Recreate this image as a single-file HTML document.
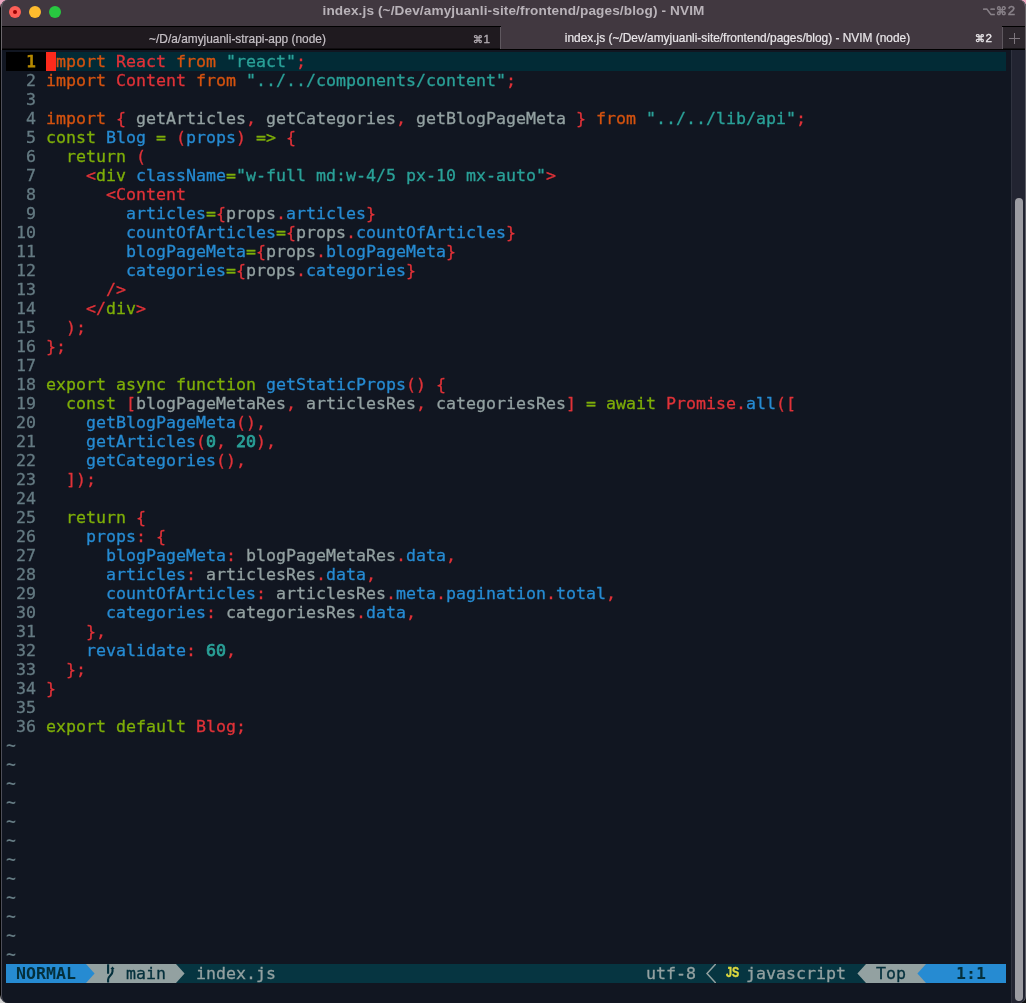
<!DOCTYPE html>
<html lang="en">
<head>
<meta charset="utf-8">
<title>index.js (~/Dev/amyjuanli-site/frontend/pages/blog) - NVIM</title>
<style>
html,body{margin:0;padding:0}
body{width:1026px;height:1003px;overflow:hidden;position:relative;background:#000;
  font-family:"Liberation Sans","DejaVu Sans",sans-serif;}
.abs{position:absolute}
/* desktop peeking out behind the rounded corners */
#ctl{left:0;top:0;width:8px;height:8px;background:linear-gradient(180deg,#eba6bf 0,#eba6bf 45%,#000 100%)}
#ctr{right:0;top:0;width:8px;height:8px;background:linear-gradient(180deg,#eba6bf 0,#eba6bf 45%,#6a4a58 100%)}
#cbl{left:0;bottom:0;width:8px;height:8px;background:linear-gradient(0deg,#d0d0d0 0,#d0d0d0 45%,#000 100%)}
#cbr{right:0;bottom:0;width:8px;height:8px;background:#111}
#win{left:1px;top:0;width:1025px;height:1003px;background:#111621;border-radius:7px;overflow:hidden;
  box-sizing:border-box;will-change:transform;}
#edge{left:1px;top:0;width:1025px;height:1003px;border-radius:7px;box-sizing:border-box;
  border-left:1px solid #4d4e58;border-right:1px solid #5f6068;pointer-events:none}
#edge2{left:1px;top:0;width:1025px;height:50px;border-radius:7px 7px 0 0;box-sizing:border-box;border-left:1px solid #6c676c;border-right:1px solid #6c676c;pointer-events:none}
#title{left:0;top:0;width:1025px;height:26px;background:#413840}
#title .t{left:0;right:0;top:3px;text-align:center;font-weight:bold;font-size:13.6px;color:#b9b3b9;letter-spacing:0.12px}
.dot{width:12px;height:12px;border-radius:50%;top:6px}
#short{right:11px;top:3px;font-size:13.2px;line-height:15px;color:#8a838a;font-family:"Liberation Sans","DejaVu Sans",sans-serif;-webkit-text-stroke:0.5px #8a838a;white-space:nowrap}
#short .sym{font-family:"DejaVu Sans",sans-serif;font-size:11.2px;letter-spacing:0.6px;vertical-align:0.5px}
#tabs{left:0;top:26px;width:1025px;height:24px;background:#000}
.tab{top:0;height:23px;font-size:11.9px;color:#c6c1c6;-webkit-text-stroke:0.2px currentColor}
.tab .lbl{left:0;right:0;top:5px;text-align:center}
.tab .key{right:10px;top:5px;font-family:"Liberation Sans","DejaVu Sans",sans-serif;font-size:11.6px;line-height:14px;-webkit-text-stroke:0.35px currentColor;white-space:nowrap}
.tab .key .sym{font-family:"DejaVu Sans",sans-serif;font-size:10.4px;margin-right:0.3px}
#t1 .key{color:#b3adb3}
#t1{left:0;width:499px;top:1px;height:21px;background:#1f1a1f;border-bottom:1px solid #100d10}
#t2{left:500px;width:501px;top:0;height:23px;background:#413840;color:#e9e6e9}
#tplus{left:1002px;width:23px;top:1px;height:21px;background:#2e282e;border-bottom:1px solid #171417}
.sep{width:1px;background:#5f585f;top:0;height:22px}
#term{left:0;top:50px;width:1025px;height:953px;background:#111621}
.row{position:absolute;left:5px;height:19px;line-height:19px;white-space:pre;
  font-family:"DejaVu Sans Mono","Liberation Mono",monospace;font-size:16.61px;color:#93a1a1;width:1000px;-webkit-text-stroke:0.3px}
.cl{background:#022b36}
.ln{color:#657b83}
.lnc{color:#b58900;font-weight:normal;-webkit-text-stroke:0.75px;background:#000;display:inline-block;height:19px}
.cur{background:#fc2a1c;color:transparent;display:inline-block;height:19px}
.k{font-weight:normal;-webkit-text-stroke:0.75px}
.tl{font-weight:bold;-webkit-text-stroke:0}
.o{color:#d5530f}
.r{color:#e03238}
.c{color:#2aa198}
.g{color:#7eae08}
.b{color:#268bd2}
.n{color:#93a1a1}
.y{color:#b58900}
#sbar{left:1010px;top:50px;width:15px;height:953px;background:#222431;border-left:1px solid #30333f;box-sizing:border-box}
#thumb{left:1014px;top:198px;width:8px;height:803px;border-radius:4px;background:#9c9ca2}
#status{left:5px;top:964px;width:1000px;height:19px;background:#063541;line-height:19px;white-space:pre;
  font-family:"DejaVu Sans Mono","Liberation Mono",monospace;font-size:16.61px;color:#93a1a1;-webkit-text-stroke:0.3px}
#status .seg{position:absolute;top:0;height:19px}
#status .js{color:#ddd83f;font-family:"Liberation Sans",sans-serif;font-weight:bold;font-size:14.2px;line-height:19px;top:-1px;transform-origin:0 50%;transform:scaleX(0.76);width:18px;-webkit-text-stroke:0.45px #ddd83f}
</style>
</head>
<body>
<div id="ctl" class="abs"></div><div id="ctr" class="abs"></div><div id="cbl" class="abs"></div><div id="cbr" class="abs"></div>
<div id="win" class="abs">
  <div id="title" class="abs">
    <div class="dot abs" style="left:8px;background:#fe5f57"></div>
    <div class="abs" style="left:12px;top:10px;width:4px;height:4px;border-radius:50%;background:#990000"></div>
    <div class="dot abs" style="left:28px;background:#febb2e"></div>
    <div class="dot abs" style="left:48px;background:#28c840"></div>
    <div class="t abs">index.js (~/Dev/amyjuanli-site/frontend/pages/blog) - NVIM</div>
    <div id="short" class="abs"><span class="sym">&#x2325;&#x2318;</span>2</div>
  </div>
  <div id="tabs" class="abs">
    <div id="t1" class="tab abs"><div class="lbl abs" style="left:0;width:473px">~/D/a/amyjuanli-strapi-app (node)</div><div class="key abs"><span class="sym">&#x2318;</span>1</div></div>
    <div class="sep abs" style="left:499px;top:1px;height:22px"></div>
    <div id="t2" class="tab abs"><div class="lbl abs" style="left:0;width:473px">index.js (~/Dev/amyjuanli-site/frontend/pages/blog) - NVIM (node)</div><div class="key abs"><span class="sym">&#x2318;</span>2</div></div>
    <div class="sep abs" style="left:1001px;top:1px;height:22px"></div>
    <div id="tplus" class="abs"><svg class="abs" style="left:5px;top:5px" width="13" height="13" viewBox="0 0 13 13"><path d="M6.5 1v11M1 6.5h11" stroke="#7d767d" stroke-width="1" fill="none"/></svg></div>
  </div>
  <div id="term" class="abs"></div>
  <div id="sbar" class="abs"></div>
  <div id="thumb" class="abs"></div>
  <div style="top:52px" class="row cl"><span class="lnc">  1 </span><span class="cur">i</span><span class="o">mport</span> <span class="r">React</span> <span class="o">from</span> <span class="c">"react"</span><span class="r">;</span></div>
  <div style="top:71px" class="row"><span class="ln">  2 </span><span class="o">import</span> <span class="r">Content</span> <span class="o">from</span> <span class="c">"../../components/content"</span><span class="r">;</span></div>
  <div style="top:90px" class="row"><span class="ln">  3 </span></div>
  <div style="top:109px" class="row"><span class="ln">  4 </span><span class="o">import</span> <span class="r">{</span><span class="n"> getArticles</span><span class="r">,</span><span class="n"> getCategories</span><span class="r">,</span><span class="n"> getBlogPageMeta </span><span class="r">}</span> <span class="o">from</span> <span class="c">"../../lib/api"</span><span class="r">;</span></div>
  <div style="top:128px" class="row"><span class="ln">  5 </span><span class="g">const</span> <span class="b">Blog</span> <span class="g">=</span> <span class="r">(</span><span class="b">props</span><span class="r">)</span> <span class="g">=&gt;</span> <span class="r">{</span></div>
  <div style="top:147px" class="row"><span class="ln">  6 </span>  <span class="g">return</span> <span class="r">(</span></div>
  <div style="top:166px" class="row"><span class="ln">  7 </span>    <span class="r">&lt;</span><span class="g">div</span> <span class="b">className</span><span class="g">=</span><span class="c">"w-full md:w-4/5 px-10 mx-auto"</span><span class="r">&gt;</span></div>
  <div style="top:185px" class="row"><span class="ln">  8 </span>      <span class="r">&lt;Content</span></div>
  <div style="top:204px" class="row"><span class="ln">  9 </span>        <span class="b">articles</span><span class="g">=</span><span class="r">{</span><span class="n">props</span><span class="r">.</span><span class="b">articles</span><span class="r">}</span></div>
  <div style="top:223px" class="row"><span class="ln"> 10 </span>        <span class="b">countOfArticles</span><span class="g">=</span><span class="r">{</span><span class="n">props</span><span class="r">.</span><span class="b">countOfArticles</span><span class="r">}</span></div>
  <div style="top:242px" class="row"><span class="ln"> 11 </span>        <span class="b">blogPageMeta</span><span class="g">=</span><span class="r">{</span><span class="n">props</span><span class="r">.</span><span class="b">blogPageMeta</span><span class="r">}</span></div>
  <div style="top:261px" class="row"><span class="ln"> 12 </span>        <span class="b">categories</span><span class="g">=</span><span class="r">{</span><span class="n">props</span><span class="r">.</span><span class="b">categories</span><span class="r">}</span></div>
  <div style="top:280px" class="row"><span class="ln"> 13 </span>      <span class="r">/&gt;</span></div>
  <div style="top:299px" class="row"><span class="ln"> 14 </span>    <span class="r">&lt;/</span><span class="g">div</span><span class="r">&gt;</span></div>
  <div style="top:318px" class="row"><span class="ln"> 15 </span>  <span class="r">);</span></div>
  <div style="top:337px" class="row"><span class="ln"> 16 </span><span class="r">};</span></div>
  <div style="top:356px" class="row"><span class="ln"> 17 </span></div>
  <div style="top:375px" class="row"><span class="ln"> 18 </span><span class="g">export async function</span> <span class="b">getStaticProps</span><span class="r">()</span> <span class="r">{</span></div>
  <div style="top:394px" class="row"><span class="ln"> 19 </span>  <span class="g">const</span> <span class="r">[</span><span class="n">blogPageMetaRes</span><span class="r">,</span><span class="n"> articlesRes</span><span class="r">,</span><span class="n"> categoriesRes</span><span class="r">]</span> <span class="g">=</span> <span class="g">await</span> <span class="r">Promise.</span><span class="b">all</span><span class="r">([</span></div>
  <div style="top:413px" class="row"><span class="ln"> 20 </span>    <span class="b">getBlogPageMeta</span><span class="r">(),</span></div>
  <div style="top:432px" class="row"><span class="ln"> 21 </span>    <span class="b">getArticles</span><span class="r">(</span><span class="c k">0</span><span class="r">,</span> <span class="c k">20</span><span class="r">),</span></div>
  <div style="top:451px" class="row"><span class="ln"> 22 </span>    <span class="b">getCategories</span><span class="r">(),</span></div>
  <div style="top:470px" class="row"><span class="ln"> 23 </span>  <span class="r">]);</span></div>
  <div style="top:489px" class="row"><span class="ln"> 24 </span></div>
  <div style="top:508px" class="row"><span class="ln"> 25 </span>  <span class="g">return</span> <span class="r">{</span></div>
  <div style="top:527px" class="row"><span class="ln"> 26 </span>    <span class="b">props</span><span class="r">:</span> <span class="r">{</span></div>
  <div style="top:546px" class="row"><span class="ln"> 27 </span>      <span class="b">blogPageMeta</span><span class="r">:</span><span class="n"> blogPageMetaRes</span><span class="r">.</span><span class="b">data</span><span class="r">,</span></div>
  <div style="top:565px" class="row"><span class="ln"> 28 </span>      <span class="b">articles</span><span class="r">:</span><span class="n"> articlesRes</span><span class="r">.</span><span class="b">data</span><span class="r">,</span></div>
  <div style="top:584px" class="row"><span class="ln"> 29 </span>      <span class="b">countOfArticles</span><span class="r">:</span><span class="n"> articlesRes</span><span class="r">.</span><span class="b">meta</span><span class="r">.</span><span class="b">pagination</span><span class="r">.</span><span class="b">total</span><span class="r">,</span></div>
  <div style="top:603px" class="row"><span class="ln"> 30 </span>      <span class="b">categories</span><span class="r">:</span><span class="n"> categoriesRes</span><span class="r">.</span><span class="b">data</span><span class="r">,</span></div>
  <div style="top:622px" class="row"><span class="ln"> 31 </span>    <span class="r">},</span></div>
  <div style="top:641px" class="row"><span class="ln"> 32 </span>    <span class="b">revalidate</span><span class="r">:</span> <span class="c k">60</span><span class="r">,</span></div>
  <div style="top:660px" class="row"><span class="ln"> 33 </span>  <span class="r">};</span></div>
  <div style="top:679px" class="row"><span class="ln"> 34 </span><span class="r">}</span></div>
  <div style="top:698px" class="row"><span class="ln"> 35 </span></div>
  <div style="top:717px" class="row"><span class="ln"> 36 </span><span class="g">export default</span> <span class="r">Blog;</span></div>
  <div style="top:736px" class="row"><span class="ln tl">~</span></div>
  <div style="top:755px" class="row"><span class="ln tl">~</span></div>
  <div style="top:774px" class="row"><span class="ln tl">~</span></div>
  <div style="top:793px" class="row"><span class="ln tl">~</span></div>
  <div style="top:812px" class="row"><span class="ln tl">~</span></div>
  <div style="top:831px" class="row"><span class="ln tl">~</span></div>
  <div style="top:850px" class="row"><span class="ln tl">~</span></div>
  <div style="top:869px" class="row"><span class="ln tl">~</span></div>
  <div style="top:888px" class="row"><span class="ln tl">~</span></div>
  <div style="top:907px" class="row"><span class="ln tl">~</span></div>
  <div style="top:926px" class="row"><span class="ln tl">~</span></div>
  <div style="top:945px" class="row"><span class="ln tl">~</span></div>
  <div id="status" class="abs"><span class="seg" style="left:0px;width:80px;background:#268bd2;color:#04303c;font-weight:bold;-webkit-text-stroke:0"> NORMAL </span><span class="seg" style="left:80px;width:10px;background:#93a1a1"><svg width="10" height="19" viewBox="0 0 10 19" style="display:block"><path d="M0 0L8.6 9.5L0 19Z" fill="#268bd2"/></svg></span><span class="seg" style="left:90px;width:80px;background:#93a1a1;color:#04303c;">   main </span><span class="seg" style="left:100px;width:10px"><svg width="10" height="19" viewBox="0 0 10 19" style="display:block"><path d="M2.1 0.2V9.8M2.1 18.4V15.6C2.1 11.6 6.5 11.4 6.5 7.6V4.4" stroke="#04303c" stroke-width="2.1" fill="none"/><path d="M6.5 2.4L8.6 5.1H4.4Z" fill="#04303c"/></svg></span><span class="seg" style="left:170px;width:10px;background:#063541"><svg width="10" height="19" viewBox="0 0 10 19" style="display:block"><path d="M0 0L8.6 9.5L0 19Z" fill="#93a1a1"/></svg></span><span class="seg" style="left:180px;width:100px;background:#063541;color:#93a1a1;"> index.js</span><span class="seg" style="left:640px;width:60px;background:#063541;color:#93a1a1;">utf-8 </span><span class="seg" style="left:700px;width:10px"><svg width="10" height="19" viewBox="0 0 10 19" style="display:block"><path d="M10 -0.3L1 9.5L10 19.3" stroke="#93a1a1" stroke-width="1.5" fill="none"/></svg></span><span class="seg js" style="left:720px">JS</span><span class="seg" style="left:740px;width:110px;background:#063541;color:#93a1a1;">javascript </span><span class="seg" style="left:850px;width:10px;background:#063541"><svg width="10" height="19" viewBox="0 0 10 19" style="display:block"><path d="M10 0L1.4 9.5L10 19Z" fill="#93a1a1"/></svg></span><span class="seg" style="left:860px;width:60px;background:#93a1a1;color:#04303c;"> Top </span><span class="seg" style="left:910px;width:10px;background:#93a1a1"><svg width="10" height="19" viewBox="0 0 10 19" style="display:block"><path d="M10 0L1.4 9.5L10 19Z" fill="#268bd2"/></svg></span><span class="seg" style="left:920px;width:80px;background:#268bd2;color:#04303c;font-weight:bold;-webkit-text-stroke:0">   1:1  </span></div>
</div>
<div id="edge" class="abs"></div><div id="edge2" class="abs"></div>
</body>
</html>
